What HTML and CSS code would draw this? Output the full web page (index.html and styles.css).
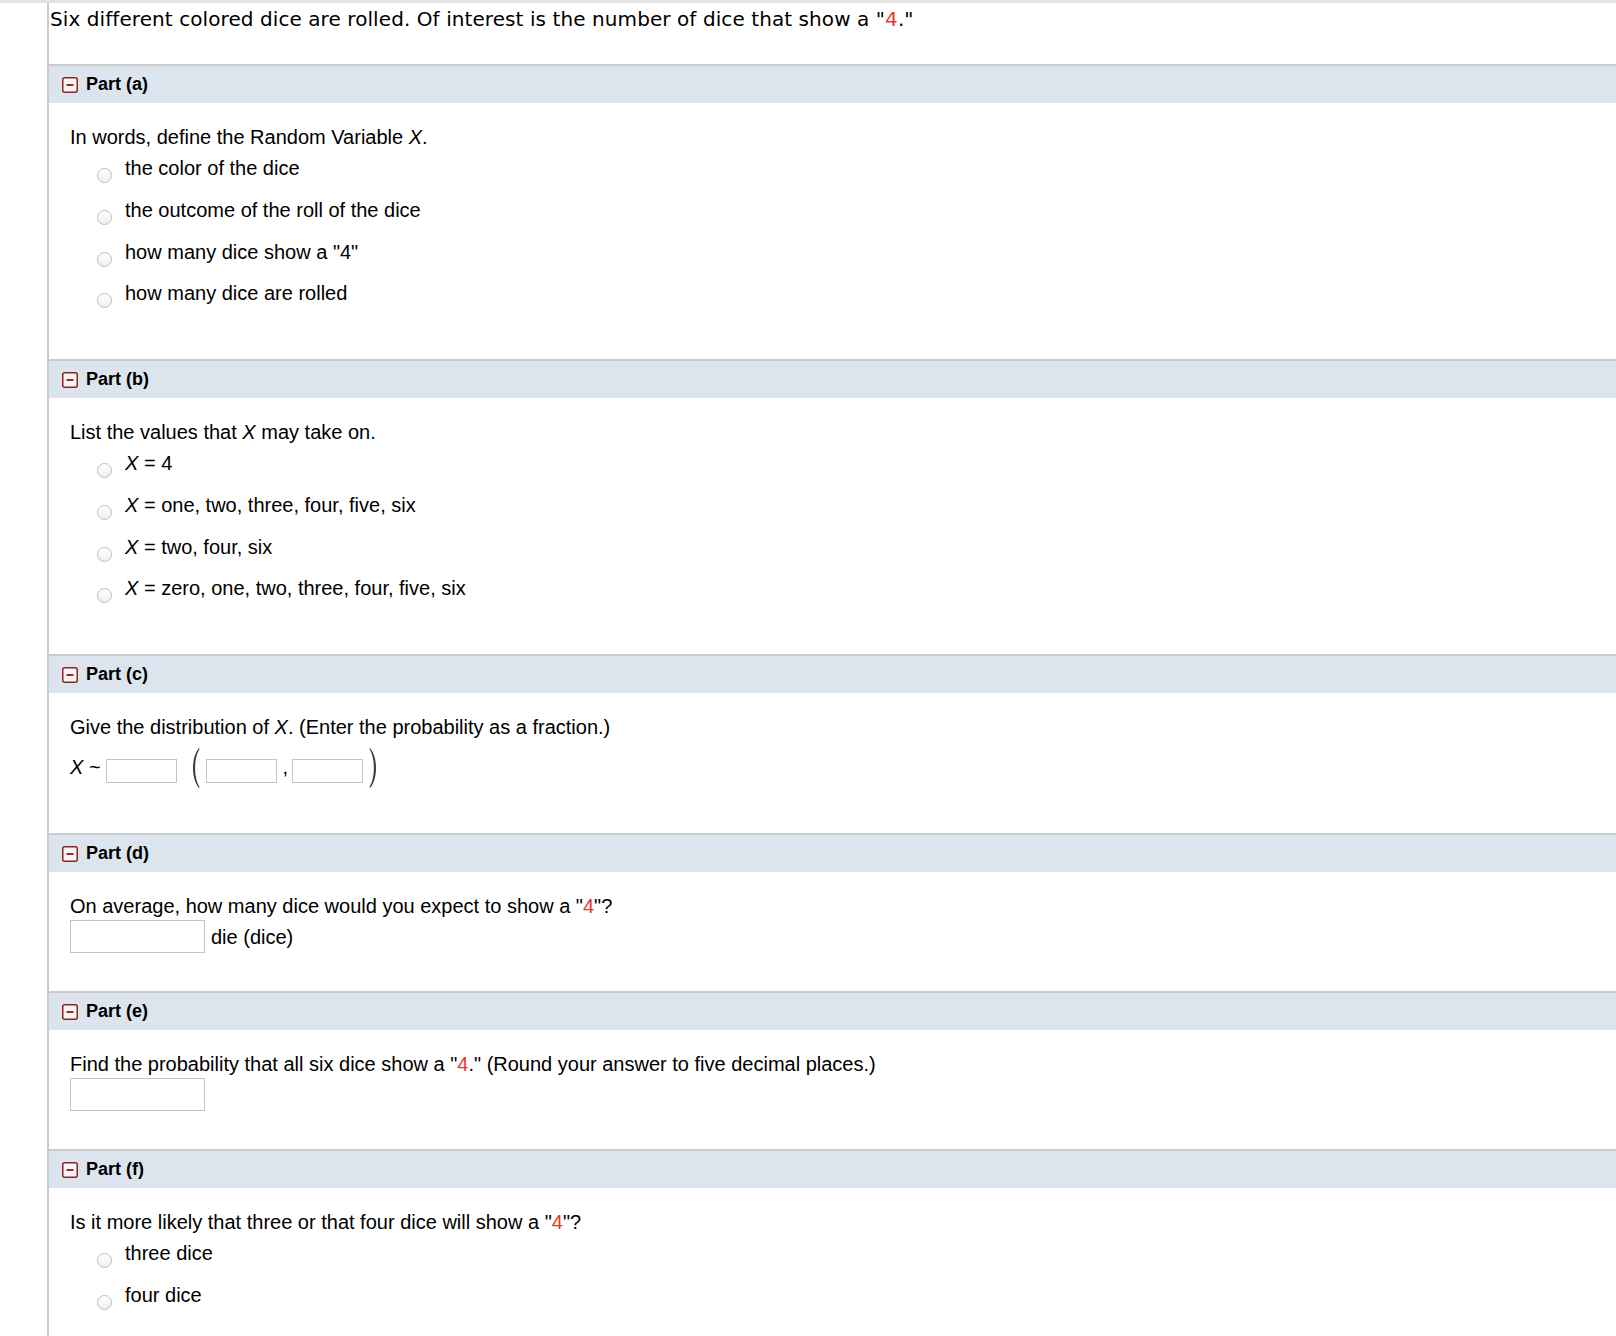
FILE: index.html
```html
<!DOCTYPE html>
<html lang="en">
<head>
<meta charset="utf-8">
<title>Six different colored dice</title>
<link rel="stylesheet" href="styles.css">
</head>
<body>
<div class="page">
  <div class="frame">
    <div class="intro">Six different colored dice are rolled. Of interest is the number of dice that show a "<span class="red">4</span>."</div>

    <section class="part">
      <div class="part-head">
        <svg class="toggle" viewBox="0 0 16 16" aria-hidden="true"><rect x="0.75" y="0.75" width="14.5" height="14.5" rx="2" fill="#f7f4f4" stroke="#8e2424" stroke-width="1.5"/><line x1="4.5" y1="8" x2="11.5" y2="8" stroke="#9a2a2a" stroke-width="2"/></svg>
        Part (a)
      </div>
      <div class="part-body">
        <div class="q">In words, define the Random Variable <i>X</i>.</div>
        <div class="options">
          <label class="opt"><span class="radio"></span><span>the color of the dice</span></label>
          <label class="opt"><span class="radio"></span><span>the outcome of the roll of the dice</span></label>
          <label class="opt"><span class="radio"></span><span>how many dice show a "4"</span></label>
          <label class="opt"><span class="radio"></span><span>how many dice are rolled</span></label>
        </div>
      </div>
    </section>

    <section class="part">
      <div class="part-head">
        <svg class="toggle" viewBox="0 0 16 16" aria-hidden="true"><rect x="0.75" y="0.75" width="14.5" height="14.5" rx="2" fill="#f7f4f4" stroke="#8e2424" stroke-width="1.5"/><line x1="4.5" y1="8" x2="11.5" y2="8" stroke="#9a2a2a" stroke-width="2"/></svg>
        Part (b)
      </div>
      <div class="part-body">
        <div class="q">List the values that <i>X</i> may take on.</div>
        <div class="options">
          <label class="opt"><span class="radio"></span><span><i>X</i> = 4</span></label>
          <label class="opt"><span class="radio"></span><span><i>X</i> = one, two, three, four, five, six</span></label>
          <label class="opt"><span class="radio"></span><span><i>X</i> = two, four, six</span></label>
          <label class="opt"><span class="radio"></span><span><i>X</i> = zero, one, two, three, four, five, six</span></label>
        </div>
      </div>
    </section>

    <section class="part">
      <div class="part-head">
        <svg class="toggle" viewBox="0 0 16 16" aria-hidden="true"><rect x="0.75" y="0.75" width="14.5" height="14.5" rx="2" fill="#f7f4f4" stroke="#8e2424" stroke-width="1.5"/><line x1="4.5" y1="8" x2="11.5" y2="8" stroke="#9a2a2a" stroke-width="2"/></svg>
        Part (c)
      </div>
      <div class="part-body dist">
        <div class="q">Give the distribution of <i>X</i>. (Enter the probability as a fraction.)</div>
        <div class="dist-row">
          <span class="lbl"><i>X</i> ~</span>
          <input class="box-sm first" type="text">
          <svg class="paren" viewBox="0 0 12 42" aria-hidden="true"><path d="M10,1 C2,10 2,32 10,41 L10.6,40.2 C4.6,31 4.6,11 10.6,1.8 Z" fill="#3a3a3a"/></svg>
          <input class="box-sm mid" type="text">
          <span class="lbl comma">,</span>
          <input class="box-sm last" type="text">
          <svg class="paren right" viewBox="0 0 12 42" aria-hidden="true"><path d="M2,1 C10,10 10,32 2,41 L1.4,40.2 C7.4,31 7.4,11 1.4,1.8 Z" fill="#3a3a3a"/></svg>
        </div>
      </div>
    </section>

    <section class="part">
      <div class="part-head">
        <svg class="toggle" viewBox="0 0 16 16" aria-hidden="true"><rect x="0.75" y="0.75" width="14.5" height="14.5" rx="2" fill="#f7f4f4" stroke="#8e2424" stroke-width="1.5"/><line x1="4.5" y1="8" x2="11.5" y2="8" stroke="#9a2a2a" stroke-width="2"/></svg>
        Part (d)
      </div>
      <div class="part-body tight">
        <div class="q">On average, how many dice would you expect to show a "<span class="red">4</span>"?</div>
        <div class="ans-row">
          <input class="box-lg" type="text">
          <span class="unit">die (dice)</span>
        </div>
      </div>
    </section>

    <section class="part">
      <div class="part-head">
        <svg class="toggle" viewBox="0 0 16 16" aria-hidden="true"><rect x="0.75" y="0.75" width="14.5" height="14.5" rx="2" fill="#f7f4f4" stroke="#8e2424" stroke-width="1.5"/><line x1="4.5" y1="8" x2="11.5" y2="8" stroke="#9a2a2a" stroke-width="2"/></svg>
        Part (e)
      </div>
      <div class="part-body tight">
        <div class="q">Find the probability that all six dice show a "<span class="red">4</span>." (Round your answer to five decimal places.)</div>
        <div class="ans-row">
          <input class="box-lg" type="text">
        </div>
      </div>
    </section>

    <section class="part">
      <div class="part-head">
        <svg class="toggle" viewBox="0 0 16 16" aria-hidden="true"><rect x="0.75" y="0.75" width="14.5" height="14.5" rx="2" fill="#f7f4f4" stroke="#8e2424" stroke-width="1.5"/><line x1="4.5" y1="8" x2="11.5" y2="8" stroke="#9a2a2a" stroke-width="2"/></svg>
        Part (f)
      </div>
      <div class="part-body">
        <div class="q">Is it more likely that three or that four dice will show a "<span class="red">4</span>"?</div>
        <div class="options">
          <label class="opt"><span class="radio"></span><span>three dice</span></label>
          <label class="opt"><span class="radio"></span><span>four dice</span></label>
        </div>
      </div>
    </section>
  </div>
</div>
</body>
</html>
```

FILE: styles.css
```css
* {
  box-sizing: border-box;
}

html,
body {
  margin: 0;
  padding: 0;
  background: #ffffff;
}

body {
  font-family: "Liberation Sans", Arial, sans-serif;
  color: #000000;
}

.page {
  border-top: 3px solid #e3e3e3;
}

.frame {
  margin-left: 47px;
  border-left: 2px solid #cbcbcb;
  min-height: 1400px;
}

.intro {
  font-family: "DejaVu Sans", Verdana, sans-serif;
  font-size: 20px;
  line-height: 24px;
  padding: 4px 0 33px 1px;
  letter-spacing: 0.08px;
}

.red {
  color: #e53b2d;
}

.part-head {
  display: flex;
  align-items: center;
  height: 39px;
  border-top: 2px solid #cbcbcb;
  background: #dce5ee;
  padding-left: 13px;
  font-size: 18px;
  font-weight: bold;
}

.toggle {
  width: 16px;
  height: 16px;
  flex: none;
  margin-right: 8px;
}

.part-body {
  padding: 20px 21px 51.75px;
  font-size: 20px;
  line-height: 28px;
}

.part-body.dist {
  padding-bottom: 44px;
}

.part-body.tight {
  padding-bottom: 38px;
}

.options {
  display: flex;
  flex-direction: column;
  gap: 13.75px;
  margin-top: 3px;
  padding-left: 27px;
}

.opt {
  display: flex;
  align-items: flex-start;
  height: 28px;
}

.radio {
  flex: none;
  width: 15px;
  height: 15px;
  margin-top: 14px;
  margin-right: 13px;
  border: 1px solid #bdbdbd;
  border-radius: 50%;
  background: linear-gradient(#ffffff, #efefef);
}

.dist-row {
  display: flex;
  align-items: flex-start;
  height: 42px;
  margin-top: 6px;
}

.lbl {
  margin-top: 6px;
  line-height: 28px;
}

.box-sm {
  width: 71px;
  height: 24px;
  margin: 12px 0 0 0;
  padding: 0;
  border: 1px solid #c4c4c4;
  background: #ffffff;
  outline: none;
  font: inherit;
}

.box-sm.first {
  margin-left: 5px;
}

.box-sm.mid {
  margin-left: 5px;
}

.box-sm.last {
  margin-left: 4px;
}

.comma {
  margin-left: 6px;
}

.paren {
  flex: none;
  width: 12px;
  height: 42px;
  margin-left: 12px;
}

.paren.right {
  margin-left: 5px;
}

.ans-row {
  display: flex;
  align-items: center;
}

.box-lg {
  width: 135px;
  height: 33px;
  margin: 0;
  padding: 0;
  border: 1px solid #c4c4c4;
  background: #ffffff;
  outline: none;
  font: inherit;
}

.unit {
  margin-left: 6px;
}
```
